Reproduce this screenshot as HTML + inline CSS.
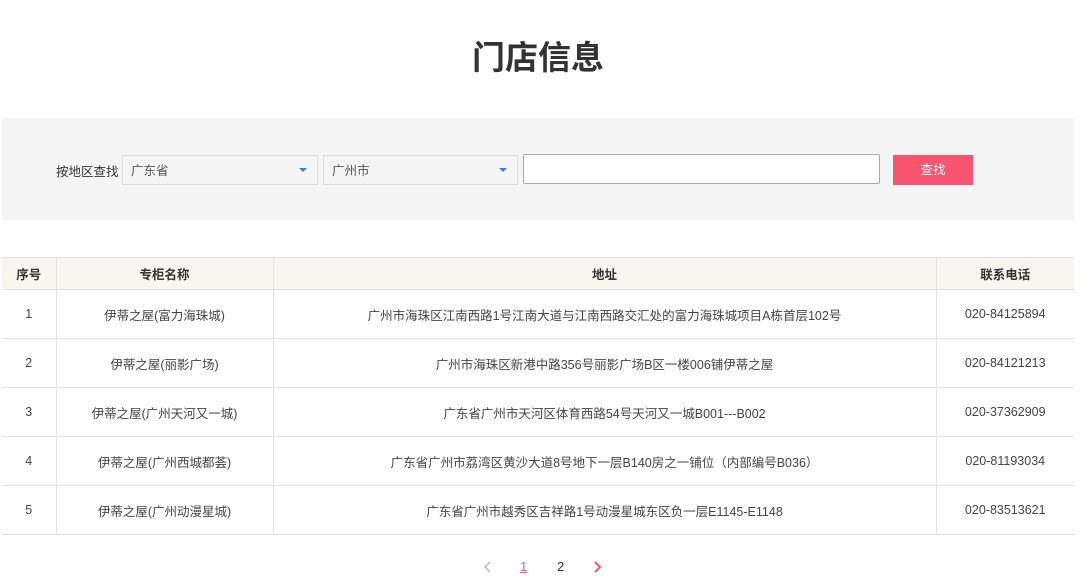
<!DOCTYPE html>
<html><head><meta charset="utf-8"><style>
body{margin:0;width:1080px;height:584px;background:#fff;font-family:"Liberation Sans","Noto Sans CJK SC",sans-serif;color:#333;position:relative;overflow:hidden}
.a{position:absolute;box-sizing:border-box}
h1{position:absolute;top:36px;left:0;width:1076px;text-align:center;margin:0;font-size:33px;font-weight:bold;color:#333;line-height:44px}
.box{left:2px;top:118px;width:1072px;height:102px;background:#f5f5f5}
.sel{background:#f5f5f5;border:1px solid #ddd;height:30px;top:155px;font-size:12.5px;color:#555;line-height:30px;padding-left:8px}
.sel i{position:absolute;right:10px;top:12px;width:0;height:0;border-left:4px solid transparent;border-right:4px solid transparent;border-top:4px solid #3a7fd5}
table{position:absolute;left:2px;top:257px;width:1072px;border-collapse:collapse;font-size:12.5px;color:#444}
td,th{border:1px solid #e3e3e3;text-align:center;padding:0}
th{background:#f9f6ef;height:31px;font-weight:bold;color:#333}
td{height:48px}
table tr td:first-child,table tr th:first-child{border-left:none}
table tr td:last-child,table tr th:last-child{border-right:none}
</style></head><body>
<h1>门店信息</h1>
<div class="a box"></div>
<div class="a" style="left:56px;top:161px;font-size:12.5px;color:#333">按地区查找</div>
<div class="a sel" style="left:122px;width:196px">广东省<i></i></div>
<div class="a sel" style="left:323px;width:195px">广州市<i></i></div>
<div class="a" style="left:523px;top:154px;width:357px;height:30px;background:#fff;border:1px solid #aaa;border-radius:2px"></div>
<div class="a" style="left:893px;top:155px;width:80px;height:30px;background:#f7546f;color:#fff;font-size:12.5px;text-align:center;line-height:30px">查找</div>
<table>
<colgroup><col style="width:54px"><col style="width:217px"><col style="width:663px"><col style="width:138px"></colgroup>
<tr><th>序号</th><th>专柜名称</th><th>地址</th><th>联系电话</th></tr>
<tr><td>1</td><td>伊蒂之屋(富力海珠城)</td><td>广州市海珠区江南西路1号江南大道与江南西路交汇处的富力海珠城项目A栋首层102号</td><td>020-84125894</td></tr>
<tr><td>2</td><td>伊蒂之屋(丽影广场)</td><td>广州市海珠区新港中路356号丽影广场B区一楼006铺伊蒂之屋</td><td>020-84121213</td></tr>
<tr><td>3</td><td>伊蒂之屋(广州天河又一城)</td><td>广东省广州市天河区体育西路54号天河又一城B001---B002</td><td>020-37362909</td></tr>
<tr><td>4</td><td>伊蒂之屋(广州西城都荟)</td><td>广东省广州市荔湾区黄沙大道8号地下一层B140房之一铺位（内部编号B036）</td><td>020-81193034</td></tr>
<tr><td>5</td><td>伊蒂之屋(广州动漫星城)</td><td>广东省广州市越秀区吉祥路1号动漫星城东区负一层E1145-E1148</td><td>020-83513621</td></tr>
</table>
<svg class="a" style="left:483px;top:561px" width="10" height="12"><path d="M7 1L2 6L7 11" stroke="#ccc" stroke-width="2" fill="none"/></svg>
<div class="a" style="left:520px;top:559px;font-size:13px;color:#f7546f;text-decoration:underline">1</div>
<div class="a" style="left:557px;top:559px;font-size:13px;color:#333">2</div>
<svg class="a" style="left:592px;top:561px" width="10" height="12"><path d="M3 1L8 6L3 11" stroke="#f7546f" stroke-width="2" fill="none"/></svg>
</body></html>
